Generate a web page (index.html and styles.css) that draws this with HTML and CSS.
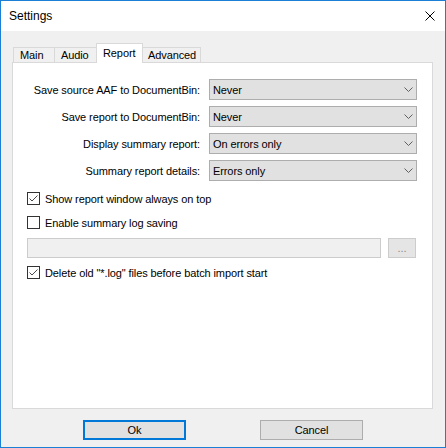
FILE: index.html
```html
<!DOCTYPE html>
<html>
<head>
<meta charset="utf-8">
<title>Settings</title>
<link rel="stylesheet" href="styles.css">
</head>
<body>
<div class="window">
  <div class="titlebar">
    <span class="title">Settings</span>
    <svg class="close" width="10" height="10" viewBox="0 0 10 10"><path d="M0.5 0.5 L9.5 9.5 M9.5 0.5 L0.5 9.5" stroke="#000" stroke-width="1" fill="none"/></svg>
  </div>
  <div class="client">
    <div class="tabstrip">
      <div class="tab tab-main">Main</div>
      <div class="tab tab-audio">Audio</div>
      <div class="tab tab-report active">Report</div>
      <div class="tab tab-adv">Advanced</div>
    </div>
    <div class="panel">
      <div class="fields">
        <div class="label">Save source AAF to DocumentBin:</div>
        <div class="combo"><span>Never</span><svg width="9" height="5" viewBox="0 0 9 5"><polyline points="0.5,0.5 4.5,4.5 8.5,0.5" fill="none" stroke="#606060"/></svg></div>
        <div class="label">Save report to DocumentBin:</div>
        <div class="combo"><span>Never</span><svg width="9" height="5" viewBox="0 0 9 5"><polyline points="0.5,0.5 4.5,4.5 8.5,0.5" fill="none" stroke="#606060"/></svg></div>
        <div class="label">Display summary report:</div>
        <div class="combo"><span>On errors only</span><svg width="9" height="5" viewBox="0 0 9 5"><polyline points="0.5,0.5 4.5,4.5 8.5,0.5" fill="none" stroke="#606060"/></svg></div>
        <div class="label">Summary report details:</div>
        <div class="combo"><span>Errors only</span><svg width="9" height="5" viewBox="0 0 9 5"><polyline points="0.5,0.5 4.5,4.5 8.5,0.5" fill="none" stroke="#606060"/></svg></div>
      </div>
      <div class="check first">
        <span class="box"><svg width="11" height="11" viewBox="0 0 11 11"><polyline points="1.5,5.5 4,8 9.5,2.5" fill="none" stroke="#4a4a4a" stroke-width="1"/></svg></span>
        <span>Show report window always on top</span>
      </div>
      <div class="check second">
        <span class="box"></span>
        <span>Enable summary log saving</span>
      </div>
      <div class="path-row">
        <div class="pathbox"></div>
        <div class="browse">...</div>
      </div>
      <div class="check third">
        <span class="box"><svg width="11" height="11" viewBox="0 0 11 11"><polyline points="1.5,5.5 4,8 9.5,2.5" fill="none" stroke="#4a4a4a" stroke-width="1"/></svg></span>
        <span>Delete old "*.log" files before batch import start</span>
      </div>
    </div>
    <div class="buttons">
      <div class="btn default">Ok</div>
      <div class="btn">Cancel</div>
    </div>
  </div>
</div>
</body>
</html>
```
FILE: styles.css
```css
* { box-sizing: border-box; }
html, body { margin: 0; padding: 0; background: #ffffff; }
body {
  font-family: "Liberation Sans", Arial, sans-serif;
  font-size: 11px;
  letter-spacing: -0.1px;
  color: #000;
}
.window {
  width: 446px;
  height: 448px;
  border: 1px solid #1c7fd6;
  background: #f0f0f0;
  display: flex;
  flex-direction: column;
}
.titlebar {
  height: 30px;
  background: #fff;
  display: flex;
  align-items: center;
  justify-content: space-between;
  padding-left: 8px;
  padding-right: 10px;
}
.title { font-size: 12px; letter-spacing: 0; }
.close { display: block; }
.client {
  flex: 1;
  padding: 12px 12px 0 11px;
}
.tabstrip {
  height: 19px;
  display: flex;
  align-items: flex-end;
  padding-left: 1px;
}
.tab {
  height: 15px;
  border: 1px solid #d9d9d9;
  border-bottom: none;
  background: #f0f0f0;
  line-height: 14px;
  padding-left: 6px;
  white-space: nowrap;
}
.tab + .tab { margin-left: -1px; }
.tab-main { width: 42px; }
.tab-audio { width: 43px; }
.tab-report { width: 47px; }
.tab-adv { width: 59px; padding-left: 5px; }
.tab.active {
  height: 20px;
  background: #fff;
  margin-bottom: -1px;
  padding-top: 2px;
  position: relative;
  z-index: 1;
}
.panel {
  height: 347px;
  border: 1px solid #d9d9d9;
  background: #fff;
  padding-top: 16px;
}
.fields {
  display: grid;
  grid-template-columns: 187px 208px;
  grid-auto-rows: 21px;
  column-gap: 9px;
  row-gap: 6px;
}
.label {
  text-align: right;
  align-self: center;
  white-space: nowrap;
}
.combo {
  height: 21px;
  border: 1px solid #adadad;
  background: #e1e1e1;
  display: flex;
  align-items: center;
  justify-content: space-between;
  padding-left: 3px;
  padding-right: 3px;
}
.combo svg { display: block; }
.check {
  display: flex;
  align-items: center;
  height: 17px;
  padding-left: 14px;
  white-space: nowrap;
}
.check.first { margin-top: 9px; }
.check.second { margin-top: 7px; }
.check.third { margin-top: 6px; }
.box {
  width: 13px;
  height: 13px;
  border: 1px solid #333;
  background: #fff;
  margin-right: 5px;
  flex: none;
}
.box svg { display: block; }
.path-row {
  display: flex;
  margin-top: 7px;
  padding-left: 14px;
  height: 20px;
}
.pathbox {
  width: 354px;
  height: 20px;
  border: 1px solid #cccccc;
  background: #f0f0f0;
}
.browse {
  width: 28px;
  height: 20px;
  margin-left: 7px;
  border: 1px solid #cccccc;
  background: #e5e5e5;
  color: #8a8a8a;
  text-align: center;
  line-height: 18px;
}
.buttons {
  display: flex;
  margin-top: 11px;
  padding-left: 71px;
  gap: 74px;
}
.btn {
  width: 103px;
  height: 20px;
  border: 1px solid #adadad;
  background: #e1e1e1;
  text-align: center;
  line-height: 18px;
}
.btn.default {
  border: 2px solid #0078d7;
  line-height: 16px;
}
```
